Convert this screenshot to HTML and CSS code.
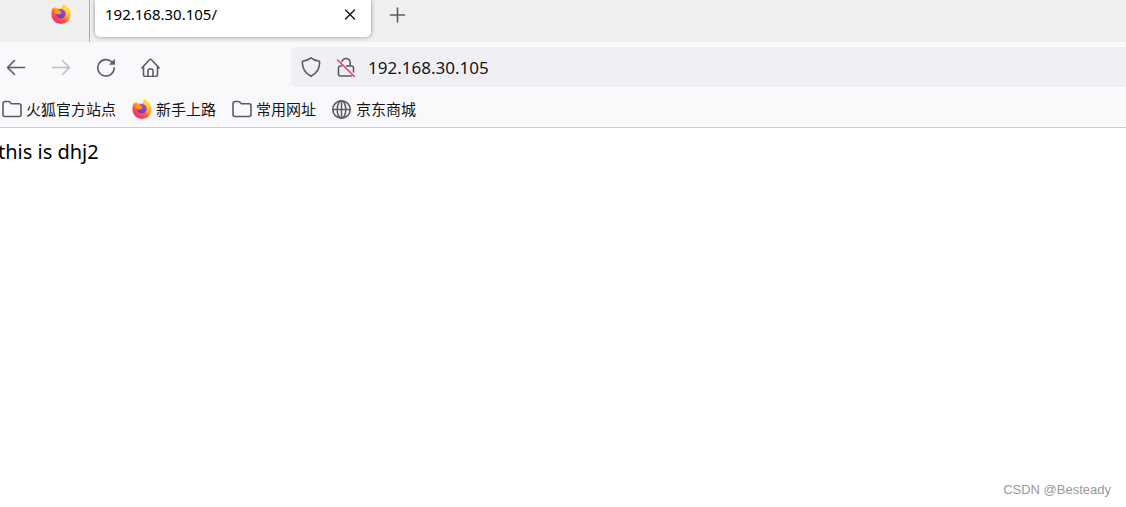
FILE: index.html
```
<!DOCTYPE html>
<html lang="zh-CN">
<head>
<meta charset="utf-8">
<title>192.168.30.105/</title>
<link rel="stylesheet" href="styles.css">
</head>
<body>
<svg class="defs" aria-hidden="true">
  <defs>
    <linearGradient id="flame" x1="0.8" y1="0.1" x2="0.2" y2="0.95">
      <stop offset="0" stop-color="#ffe83f"/>
      <stop offset="0.35" stop-color="#ffb02e"/>
      <stop offset="0.62" stop-color="#ff5a3c"/>
      <stop offset="1" stop-color="#f02482"/>
    </linearGradient>
    <linearGradient id="globe" x1="0.7" y1="0" x2="0.3" y2="1">
      <stop offset="0" stop-color="#a148e8"/>
      <stop offset="1" stop-color="#5545c8"/>
    </linearGradient>
    <symbol id="fox" viewBox="0 0 20 20">
      <path fill="url(#flame)" d="M12.600.2c1.500.7 2.800 2.100 3.300 3.800.4-.4.500-.8.500-1.200 2.100 2 3.300 4.600 3.300 7.500A9.700 9.500 0 0 1 10 20 9.700 9.500 0 0 1 .4 10.500C.3 8 .9 5.500 2 3.300l.7 1.500L4.300 2.500l.6 2.100c1.300-.5 2.500-.4 3.600.1l2.600-.9C11.100 2.400 11.700 1 12.600.2z"/>
      <path fill="url(#globe)" d="M7.500 5.500c2.500-1.400 6.300-.3 7 3 .6 3.500-1.800 5.800-4.500 5.800-2.900 0-4.900-2-4.700-4.500.7.700 1.700.9 2.700.8 1.100-.1 1.700-.8 2.800-1-.2-.9-1-1.200-2.200-1.200z"/>
      <path fill="#ff9b27" d="M3.400 6.300c1.500-1 3.400-.9 4.600.2l2.500.9c-.2.800-1 1.100-2 1.500-.5.900-1.200 1.400-2.300 1.200L3.700 9z"/>
      <path fill="#ffd83a" d="M12.600.2c1.500.7 2.800 2.100 3.300 3.800 1.200 1.900 1.700 4.300.9 6.700-.3-2.400-1.500-3.900-3.300-5-1-.7-1.900-1.200-2.300-2C11.200 2.400 11.800 1 12.600.2z"/>
    </symbol>
    <symbol id="folder" viewBox="0 0 20 20">
      <path d="M1 15.500v-11a2 2 0 0 1 2-2h3.500a2 2 0 0 1 1.500.7l1.400 1.600H17a2 2 0 0 1 2 2v8.700a2 2 0 0 1-2 2H3a2 2 0 0 1-2-2z"/>
    </symbol>
  </defs>
</svg>

<header class="browser">
  <div class="tabs">
    <button class="pinned" aria-label="Firefox"><svg class="icon"><use href="#fox"/></svg></button>
    <div class="tab">
      <span class="tab-title">192.168.30.105/</span>
      <button class="close" aria-label="关闭标签页">
        <svg class="icon" viewBox="0 0 20 20"><path d="M5.500 6l9 9M14.500 6l-9 9"/></svg>
      </button>
    </div>
    <button class="new-tab" aria-label="新建标签页">
      <svg class="icon" viewBox="0 0 20 20"><path d="M10.500 3v14M3.500 10h14"/></svg>
    </button>
  </div>

  <nav class="toolbar">
    <div class="nav-buttons">
      <button aria-label="后退"><svg class="icon" viewBox="0 0 20 20"><path d="M18.500 10.500h-17M8.500 3.500l-7 7 7 7"/></svg></button>
      <button aria-label="前进" disabled><svg class="icon" viewBox="0 0 20 20"><path d="M1.500 10.500h17M11.500 3.500l7 7-7 7"/></svg></button>
      <button aria-label="刷新"><svg class="icon" viewBox="0 0 20 20"><path d="M15.800 5A8.200 8.200 0 1 0 18.200 10.800"/><path class="solid" d="M18.900 1.700v6h-6z"/></svg></button>
      <button aria-label="主页"><svg class="icon" viewBox="0 0 20 20"><path d="M.8 11l7.700-8.300a1.300 1.300 0 0 1 2 0l7.700 8.300M2.500 9.500v8a2 2 0 0 0 2 2h10a2 2 0 0 0 2-2v-8M7 19.300v-5.800a1.500 1.500 0 0 1 1.500-1.500h2a1.500 1.500 0 0 1 1.500 1.500v5.800"/></svg></button>
    </div>
    <div class="address">
      <svg class="icon" viewBox="0 0 20 20"><path d="M10 .9c2.400 2.200 5 3 8.500 3.300.6 6.200-1.700 11.500-8.500 15-6.800-3.500-9.100-8.800-8.500-15C5 3.900 7.600 3.100 10 .9z"/></svg>
      <svg class="icon" viewBox="0 0 20 20"><path d="M6 4.500a4.200 4.200 0 0 1 8.200.8V9h1.300a2 2 0 0 1 2 2v4M10.500 9h3.700M5.500 9H4.500a2 2 0 0 0-2 2v6a2 2 0 0 0 2 2h11"/><path class="slash" d="M1.500 3l17 16.500"/></svg>
      <input class="url" type="text" aria-label="网址" value="192.168.30.105">
    </div>
  </nav>

  <nav class="bookmarks">
    <a href="#"><svg class="icon"><use href="#folder"/></svg>火狐官方站点</a>
    <a href="#"><svg class="icon"><use href="#fox"/></svg>新手上路</a>
    <a href="#"><svg class="icon"><use href="#folder"/></svg>常用网址</a>
    <a href="#"><svg class="icon" viewBox="0 0 20 20"><circle cx="9.500" cy="10.500" r="8.700"/><ellipse cx="9.500" cy="10.500" rx="4.300" ry="8.700"/><path d="M1 10.500h17M9.500 2v17"/></svg>京东商城</a>
  </nav>
</header>

<main class="page">
  <p class="message">this is dhj2</p>
  <span class="watermark">CSDN @Besteady</span>
</main>
</body>
</html>
```
FILE: styles.css
```
* {
    box-sizing: border-box;
}

body {
    margin: 0;
    min-height: 100vh;
    display: flex;
    flex-direction: column;
    background: #fff;
    color: #000;
    font-family: "Noto Sans", "Noto Sans CJK SC", sans-serif;
    font-size: 15px;
}

button {
    display: flex;
    padding: 0;
    border: none;
    background: none;
    color: #5b5b66;
}

.defs {
    position: absolute;
    width: 0;
    height: 0;
}

.icon {
    display: block;
    flex: none;
    width: 20px;
    height: 20px;
    fill: none;
    stroke: currentColor;
    stroke-width: 1.6;
    stroke-linecap: round;
    stroke-linejoin: round;
}

.icon .solid {
    fill: currentColor;
    stroke: none;
}

.icon .slash {
    stroke: #f03c62;
}

/* tab strip */
.tabs {
    display: flex;
    height: 42px;
    background: #efefef;
}

.pinned {
    width: 90px;
    padding: 4px 0 0 51px;
    border-right: 1px solid #aaa;
}

.pinned .icon,
.bookmarks a:nth-child(2) .icon {
    stroke: none;
}

.tab {
    display: flex;
    justify-content: space-between;
    width: 276px;
    height: 37px;
    margin-left: 5px;
    padding: 4px 11px 0 10px;
    border-radius: 0 0 5px 5px;
    background: #fff;
    box-shadow: 0 0 4px rgba(0, 0, 0, 0.4);
}

.tab-title {
    line-height: 20px;
}

.close {
    height: 20px;
    color: #15141a;
}

.close .icon {
    stroke-width: 1.4;
}

.new-tab {
    margin-left: 16px;
    padding-top: 5px;
}

/* navigation */
.toolbar {
    display: flex;
    align-items: center;
    height: 50px;
    background: #f9f9fb;
}

.nav-buttons {
    display: flex;
    flex: none;
    gap: 25px;
    width: 291px;
    padding-left: 6px;
}

.nav-buttons button:disabled {
    color: #bfbfc4;
}

.address {
    display: flex;
    flex: 1;
    align-items: center;
    gap: 12px;
    height: 40px;
    padding-left: 10px;
    border-radius: 5px 0 0 5px;
    background: #f0f0f4;
    color: #5b5b66;
}

.address .icon:first-child {
    margin-right: 3px;
}

.url {
    flex: 1;
    min-width: 0;
    height: 40px;
    padding: 0;
    border: none;
    outline: none;
    background: none;
    color: #15141a;
    font: inherit;
    font-size: 17px;
}

/* bookmarks bar */
.bookmarks {
    display: flex;
    align-items: center;
    gap: 16px;
    height: 36px;
    padding: 0 0 1px 2px;
    border-bottom: 1px solid #ccc;
    background: #f9f9fb;
}

.bookmarks a {
    display: flex;
    align-items: center;
    gap: 4px;
    color: #15141a;
    line-height: 20px;
    text-decoration: none;
    white-space: nowrap;
}

.bookmarks .icon {
    color: #5b5b66;
}

/* page content */
.page {
    display: flex;
    flex: 1;
    flex-direction: column;
    justify-content: space-between;
}

.message {
    margin: 9px 0 0 -2px;
    font-size: 20px;
    line-height: 30px;
}

.watermark {
    align-self: flex-end;
    margin: 0 15px 7px 0;
    color: #999;
    font-family: "Liberation Sans", Arial, sans-serif;
    font-size: 13px;
    line-height: 20px;
}
```
